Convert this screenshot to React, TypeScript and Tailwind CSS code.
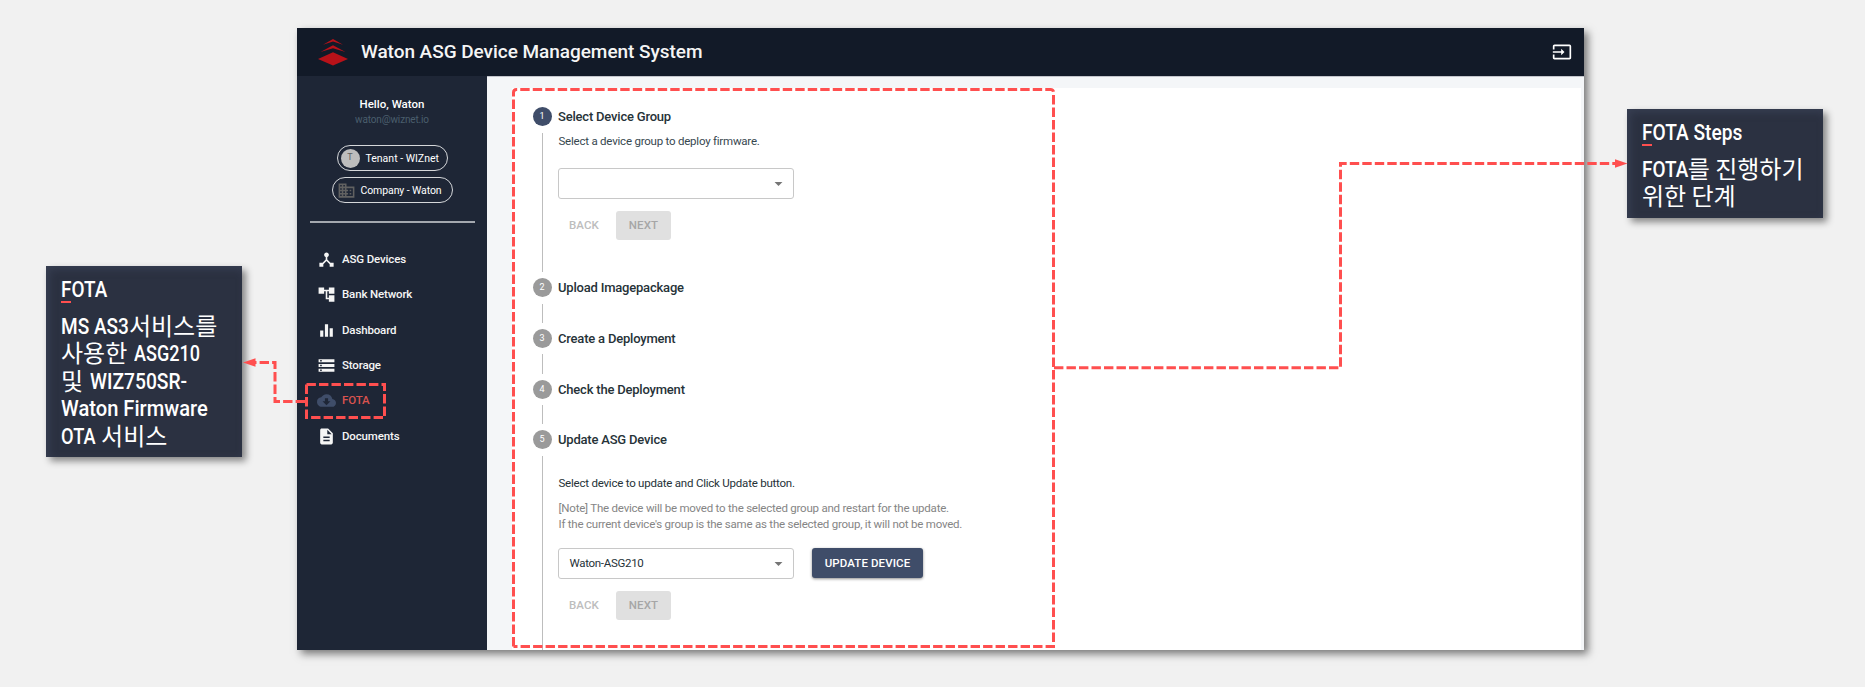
import type { ReactNode } from "react";
import type { IconType } from "react-icons";
import {
  MdAccountTree,
  MdArrowDropDown,
  MdBusiness,
  MdCloudDownload,
  MdDescription,
  MdDeviceHub,
  MdEqualizer,
  MdInput,
  MdStorage,
} from "react-icons/md";

const NAV: { label: string; icon: IconType; active?: boolean }[] = [
  { label: "ASG Devices", icon: MdDeviceHub },
  { label: "Bank Network", icon: MdAccountTree },
  { label: "Dashboard", icon: MdEqualizer },
  { label: "Storage", icon: MdStorage },
  { label: "FOTA", icon: MdCloudDownload, active: true },
  { label: "Documents", icon: MdDescription },
];

function Ko({ children }: { children: ReactNode }) {
  return (
    <span className="relative top-px font-['Noto_Sans_CJK_KR',sans-serif] text-[24px] leading-[0] font-normal tracking-normal">
      {children}
    </span>
  );
}

/* Condensed Latin run; the negative margin gives back the width the scale removes. */
function Latin({ children, className }: { children: ReactNode; className: string }) {
  return <span className={`inline-block origin-left ${className}`}>{children}</span>;
}

function Callout({ title, children, className }: { title: ReactNode; children: ReactNode; className: string }) {
  return (
    <aside
      className={`w-[196px] shrink-0 bg-[#2b3141] pl-[15px] text-[22px] font-medium text-white shadow-[4px_4px_7px_rgba(0,0,0,0.45),inset_3px_3px_9px_rgba(70,80,105,0.45)] ${className}`}
    >
      <h2 className="pt-[10px] leading-[27px] font-medium">{title}</h2>
      <div className="mt-[-2px] h-[2px] w-[10px] bg-[#ff4f4f]" />
      <div className="mt-[10px] whitespace-nowrap">{children}</div>
    </aside>
  );
}

function Line({ children }: { children: ReactNode }) {
  return <p className="h-[27.4px] leading-[27.4px]">{children}</p>;
}

function Logo() {
  return (
    <svg width="30" height="27" viewBox="0 0 30 27" fill="#b81219">
      <path d="M15 13.2 L30 20 L15 26.6 L0 20 Z" />
      <path d="M15 6.3 L27.5 13 L15 9.3 L2.5 13 Z" />
      <path d="M15 0 L25 5.8 L15 2.6 L5 5.8 Z" />
    </svg>
  );
}

function Step({
  n,
  title,
  active,
  height,
  children,
}: {
  n: number;
  title: string;
  active?: boolean;
  height: string;
  children?: ReactNode;
}) {
  return (
    <section className={`flex shrink-0 ${height}`}>
      <div className="flex w-[19px] flex-col">
        <span
          className={`ml-[0.5px] flex h-[19px] w-[19px] shrink-0 items-center justify-center rounded-full text-[9px] leading-none text-white ${active ? "bg-[#3f4d69]" : "bg-[#9a9a9a]"}`}
        >
          {n}
        </span>
        <span className="mt-[6.5px] mb-[6px] ml-[10px] w-px grow bg-[#bdbdbd]" />
      </div>
      <div className="ml-[7px] min-w-0">
        <h3 className="text-[13px] leading-[20px] font-medium tracking-[-0.2px] text-[#263238]">{title}</h3>
        {children}
      </div>
    </section>
  );
}

function SelectBox({ value }: { value?: string }) {
  return (
    <div className="flex h-[30.5px] w-[236px] items-center justify-between rounded-[3px] border border-[#c8c8c8] pr-[5px] pl-[10.5px] text-[11.5px] tracking-[-0.3px] text-[#263238]">
      <span>{value}</span>
      <MdArrowDropDown className="h-[19px] w-[19px] text-[#757575]" />
    </div>
  );
}

function StepButtons() {
  return (
    <div className="flex items-center text-[11.5px] font-medium tracking-[0.1px]">
      <span className="w-[58px] pl-[11px] text-[#bdbdbd]">BACK</span>
      <span className="flex h-[29px] w-[55px] items-center justify-center rounded-[3px] bg-[#e0e0e0] text-[#a6a6a6]">
        NEXT
      </span>
    </div>
  );
}

function Connectors() {
  return (
    <svg
      className="pointer-events-none absolute top-0 left-0"
      width="1865"
      height="687"
      fill="none"
      stroke="#ff4f4f"
      strokeWidth="3"
      strokeDasharray="9.4 3.1"
    >
      <path d="M513.5 646.5 V92.5 Q513.5 89.5 516.5 89.5 H1050.5 Q1053.5 89.5 1053.5 92.5 V646.5 H513.5" />
      <path d="M306.5 384.5 H384.5 V417.5 H306.5 Z" />
      <path d="M1054 367.7 H1340.5 V163.5 H1616" />
      <path d="M305 401.5 H275 V362.5 H254" />
      <path d="M1627.5 163.5 L1615 159.3 V167.7 Z" fill="#ff4f4f" stroke="none" />
      <path d="M243 362.5 L255.5 358.3 V366.7 Z" fill="#ff4f4f" stroke="none" />
    </svg>
  );
}

export default function App() {
  return (
    <div className="relative flex h-[687px] w-[1865px] items-start overflow-hidden bg-[#f1f1f1] font-[Roboto,'Noto_Sans_CJK_KR',sans-serif]">
      <Callout title={<Latin className="scale-x-[0.86]">FOTA</Latin>} className="mt-[266px] ml-[46px] h-[191px]">
        <Line>
          <Latin className="mr-[-10.5px] scale-x-[0.865]">MS AS3</Latin>
          <Ko>서비스를</Ko>
        </Line>
        <Line>
          <Ko>사용한</Ko> <Latin className="ml-px scale-x-[0.82]">ASG210</Latin>
        </Line>
        <Line>
          <Ko>및</Ko> <Latin className="ml-px scale-x-[0.875]">WIZ750SR-</Latin>
        </Line>
        <Line>
          <Latin className="scale-x-[0.915]">Waton Firmware</Latin>
        </Line>
        <Line>
          <Latin className="mr-[-7px] scale-x-[0.83]">OTA</Latin> <Ko>서비스</Ko>
        </Line>
      </Callout>

      <div className="mt-[28px] ml-[55px] flex h-[622px] w-[1287px] shrink-0 flex-col bg-white shadow-[4px_4px_8px_rgba(0,0,0,0.5)]">
        <header className="flex h-[48px] shrink-0 items-center bg-[#121a28] pr-[12px] pl-[21px]">
          <Logo />
          <h1 className="ml-[13px] grow text-[19px] font-medium tracking-[-0.04px] whitespace-nowrap text-[#f5f5f5]">
            Waton ASG Device Management System
          </h1>
          <MdInput className="h-[20px] w-[20px] text-white" />
        </header>

        <div className="flex min-h-0 grow">
          <nav className="flex w-[190px] shrink-0 flex-col items-center bg-[#1e2636]">
            <p className="mt-[20px] text-[11.5px] leading-[16px] font-medium text-white">Hello, Waton</p>
            <p className="text-[10px] leading-[15px] tracking-[-0.15px] text-[#4a5e6d]">waton@wiznet.io</p>
            <div className="mt-[18px] flex h-[26px] w-[111px] items-center rounded-full border border-[#d5d7da] pl-[3px] text-[10.5px] text-white">
              <span className="mr-[6px] flex h-[19px] w-[19px] items-center justify-center rounded-full bg-[#bdbdbd] text-[9px] text-[#616161]">
                T
              </span>
              <span className="pt-px">Tenant - WIZnet</span>
            </div>
            <div className="mt-[6px] flex h-[26px] w-[121px] items-center rounded-full border border-[#d5d7da] pl-[4px] text-[10.5px] tracking-[-0.1px] text-white">
              <MdBusiness className="mr-[5px] h-[19px] w-[19px] text-[#616161]" />
              <span className="pt-px">Company - Waton</span>
            </div>
            <div className="mt-[18px] h-[1.5px] w-[165px] bg-[#a4a8af]" />
            <ul className="mt-[19.5px] w-full">
              {NAV.map(({ label, icon: Icon, active }) => (
                <li
                  key={label}
                  className={`flex h-[35.3px] items-center pl-[20px] text-[11.5px] font-medium tracking-[-0.15px] ${active ? "text-[#d9534f]" : "text-[#f5f5f5]"}`}
                >
                  <Icon className={`mr-[6px] h-[19px] w-[19px] ${active ? "text-[#3f4d69]" : "text-[#f5f5f5]"}`} />
                  {label}
                </li>
              ))}
            </ul>
          </nav>

          <main className="min-w-0 grow border-t border-[#c3c5cc] bg-[#f4f6f8] pt-[11px] pr-[3px] pl-[25px]">
            <div className="flex h-full flex-col overflow-hidden bg-white pt-[19px] pl-[20px]">
              <Step n={1} title="Select Device Group" active height="h-[171px]">
                <p className="mt-[6px] mb-[18px] pl-[0.5px] text-[11.5px] leading-[17px] tracking-[-0.22px] text-[#37474f]">
                  Select a device group to deploy firmware.
                </p>
                <SelectBox />
                <div className="h-[12.5px]" />
                <StepButtons />
              </Step>
              <Step n={2} title="Upload Imagepackage" height="h-[50.8px]" />
              <Step n={3} title="Create a Deployment" height="h-[50.8px]" />
              <Step n={4} title="Check the Deployment" height="h-[50.8px]" />
              <Step n={5} title="Update ASG Device" height="h-[240px]">
                <p className="mt-[24.5px] pl-[0.5px] text-[11.5px] leading-[17px] tracking-[-0.22px] text-[#263238]">
                  Select device to update and Click Update button.
                </p>
                <p className="mt-[8px] mb-[15.5px] pl-[0.5px] text-[11.5px] leading-[16.5px] tracking-[-0.22px] whitespace-nowrap text-[#858585]">
                  [Note] The device will be moved to the selected group and restart for the update.
                  <br />
                  If the current device's group is the same as the selected group, it will not be moved.
                </p>
                <div className="flex gap-[18px]">
                  <SelectBox value="Waton-ASG210" />
                  <span className="flex h-[30px] w-[111px] items-center justify-center rounded-[3px] bg-[#3f4d69] text-[11.5px] font-medium tracking-[0.1px] text-white shadow-[0_1px_3px_rgba(0,0,0,0.45)]">
                    UPDATE DEVICE
                  </span>
                </div>
                <div className="h-[12.5px]" />
                <StepButtons />
              </Step>
            </div>
          </main>
        </div>
      </div>

      <Callout title={<Latin className="scale-x-[0.87]">FOTA Steps</Latin>} className="mt-[109px] ml-[43px] h-[109px]">
        <Line>
          <Latin className="mr-[-8px] scale-x-[0.86]">FOTA</Latin>
          <Ko>를 진행하기</Ko>
        </Line>
        <Line>
          <Ko>위한 단계</Ko>
        </Line>
      </Callout>

      <Connectors />
    </div>
  );
}
